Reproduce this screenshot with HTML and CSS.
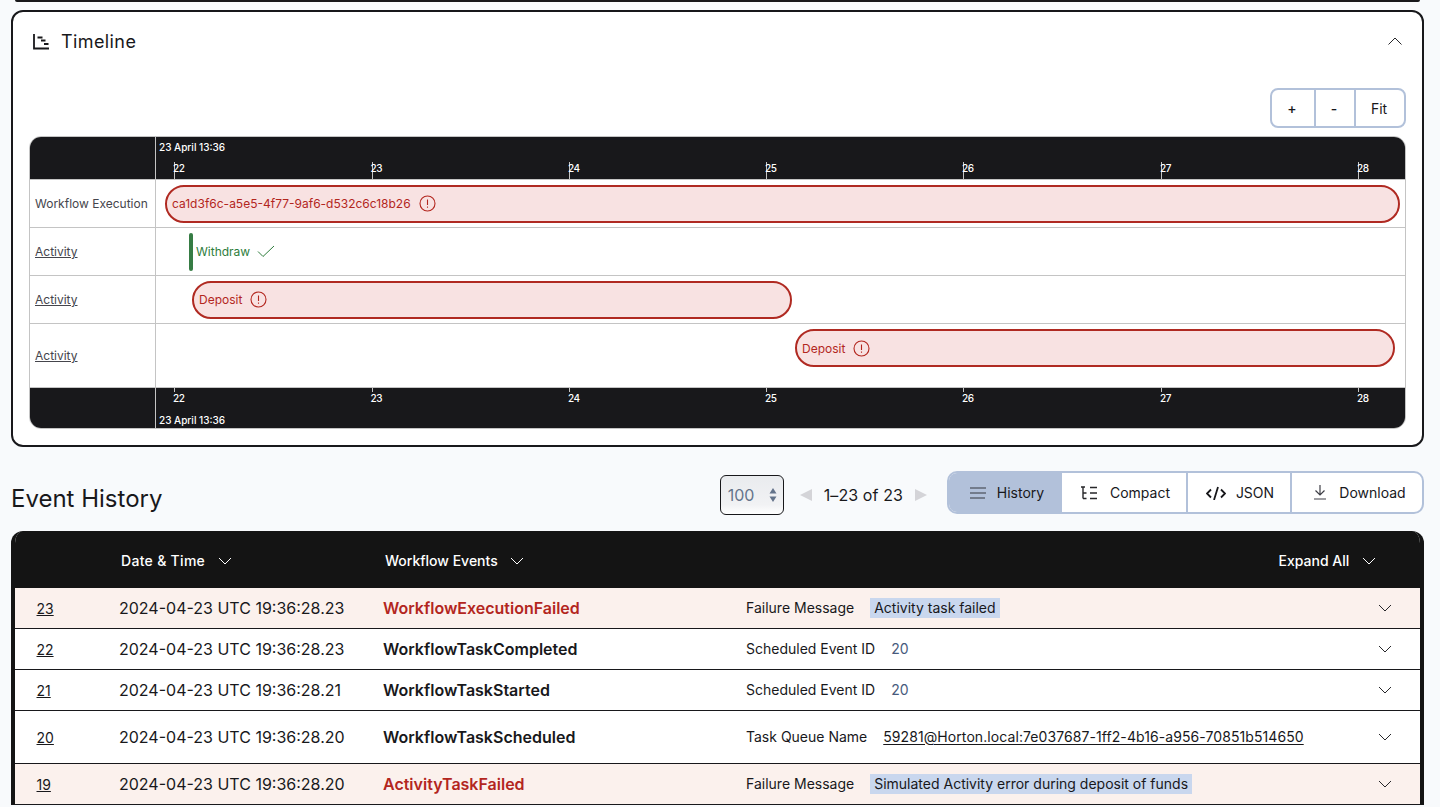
FILE: index.html
```html
<!DOCTYPE html>
<html lang="en">
<head>
    <meta charset="UTF-8">
    <meta name="viewport" content="width=device-width, initial-scale=1.0">
    <title>Workflow Timeline</title>
    <link rel="stylesheet" href="styles.css">
</head>
<body>

<div class="prev-card"></div>

<section class="card">
    <div class="card-head">
        <h2 class="card-title">
            <svg class="ico-chart" width="17" height="16" viewBox="0 0 17 16" fill="none" stroke="#18181b" stroke-width="1.800"><path d="M1 0v14.500h15"/><path d="M4.500 3.500h5M8 6.500h4.500M11 10h4.500"/></svg>
            Timeline
        </h2>
        <svg class="chev" width="16" height="10" viewBox="0 0 16 10" fill="none" stroke="#27272a" stroke-width="1"><path d="M1.500 8.500 8 2l6.500 6.500"/></svg>
    </div>

    <div class="zoom-row">
        <div class="zoom-group">
            <button class="zoom-btn zoom-plus">+</button>
            <button class="zoom-btn zoom-minus">-</button>
            <button class="zoom-btn zoom-fit">Fit</button>
        </div>
    </div>

    <div class="chart">
        <div class="axis axis-top">
            <div class="axis-side"></div>
            <div class="axis-main">
                <span class="axis-date">23 April 13:36</span>
                <span class="tick" style="left: 18px">22</span>
                <span class="tick" style="left: 215.500px">23</span>
                <span class="tick" style="left: 413px">24</span>
                <span class="tick" style="left: 610px">25</span>
                <span class="tick" style="left: 807px">26</span>
                <span class="tick" style="left: 1005px">27</span>
                <span class="tick" style="left: 1202px">28</span>
            </div>
        </div>

        <div class="row">
            <div class="row-label">Workflow Execution</div>
            <div class="row-main">
                <div class="bar bar-fail" style="margin-left: 9px; width: 1235px">
                    <span>ca1d3f6c-a5e5-4f77-9af6-d532c6c18b26</span>
                    <svg class="ico-alert" width="17" height="17" viewBox="0 0 17 17" fill="none" stroke="#b3261e" stroke-width="1.100"><circle cx="8.500" cy="8.500" r="7.500"/><path d="M8.500 4.500v5.500M8.500 11.500v1.300"/></svg>
                </div>
            </div>
        </div>

        <div class="row">
            <div class="row-label"><a href="#">Activity</a></div>
            <div class="row-main">
                <div class="mark" style="margin-left: 33px"></div>
                <span class="mark-text">Withdraw</span>
                <svg class="ico-check" width="18" height="13" viewBox="0 0 18 13" fill="none" stroke="#2e7d3c" stroke-width="1"><path d="M1 6.500 6 11.500 17 1"/></svg>
            </div>
        </div>

        <div class="row">
            <div class="row-label"><a href="#">Activity</a></div>
            <div class="row-main">
                <div class="bar bar-fail" style="margin-left: 36px; width: 600px">
                    <span>Deposit</span>
                    <svg class="ico-alert" width="17" height="17" viewBox="0 0 17 17" fill="none" stroke="#b3261e" stroke-width="1.100"><circle cx="8.500" cy="8.500" r="7.500"/><path d="M8.500 4.500v5.500M8.500 11.500v1.300"/></svg>
                </div>
            </div>
        </div>

        <div class="row row-tall">
            <div class="row-label"><a href="#">Activity</a></div>
            <div class="row-main">
                <div class="bar bar-fail" style="margin-left: 639px; width: 600px">
                    <span>Deposit</span>
                    <svg class="ico-alert" width="17" height="17" viewBox="0 0 17 17" fill="none" stroke="#b3261e" stroke-width="1.100"><circle cx="8.500" cy="8.500" r="7.500"/><path d="M8.500 4.500v5.500M8.500 11.500v1.300"/></svg>
                </div>
            </div>
        </div>

        <div class="axis axis-bottom">
            <div class="axis-side"></div>
            <div class="axis-main">
                <span class="tick" style="left: 18px">22</span>
                <span class="tick" style="left: 215.500px">23</span>
                <span class="tick" style="left: 413px">24</span>
                <span class="tick" style="left: 610px">25</span>
                <span class="tick" style="left: 807px">26</span>
                <span class="tick" style="left: 1005px">27</span>
                <span class="tick" style="left: 1202px">28</span>
                <span class="axis-date">23 April 13:36</span>
            </div>
        </div>
    </div>
</section>

<div class="history-bar">
    <h1 class="history-title">Event History</h1>
    <div class="history-tools">
        <div class="per-page">
            <span>100</span>
            <svg width="8" height="14" viewBox="0 0 8 14" fill="#64748b"><path d="M4 0l3.500 5.500h-7zM4 14l3.500-5.500h-7z"/></svg>
        </div>
        <div class="pager">
            <span class="pager-arrow pager-prev"></span>
            <span class="pager-text">1–23 of 23</span>
            <span class="pager-arrow pager-next"></span>
        </div>
        <div class="view-group">
            <button class="view-btn view-active">
                <svg width="16" height="12" viewBox="0 0 16 12" fill="none" stroke="#5f6673" stroke-width="1.500"><path d="M0 1h16M0 6h16M0 11h15"/></svg>
                History
            </button>
            <button class="view-btn view-compact">
                <svg width="17" height="14" viewBox="0 0 17 14" fill="none" stroke="#27272a" stroke-width="1.400"><path d="M0 1h4M2 1v11.500M2 7h3.500M2 12.500h3.500M9 1.500h7M9 7h7M9 12.500h7"/></svg>
                Compact
            </button>
            <button class="view-btn view-json">
                <svg width="20" height="14" viewBox="0 0 20 14" fill="none" stroke="#18181b" stroke-width="1.800"><path d="M5 3.500 1 7.500l4 4M15 3.500l4 4-4 4M12 1 8 14"/></svg>
                JSON
            </button>
            <button class="view-btn view-download">
                <svg width="14" height="15" viewBox="0 0 14 15" fill="none" stroke="#3f3f46" stroke-width="1.200"><path d="M7 0v10M2.500 5.500 7 10l4.500-4.500M1 14h12"/></svg>
                Download
            </button>
        </div>
    </div>
</div>

<section class="events">
    <div class="events-head">
        <div class="head-date">Date &amp; Time <svg class="chev-down" width="14" height="8" viewBox="0 0 14 8" fill="none" stroke="#fff" stroke-width="1"><path d="M1 1l6 6 6-6"/></svg></div>
        <div class="head-event">Workflow Events <svg class="chev-down" width="14" height="8" viewBox="0 0 14 8" fill="none" stroke="#fff" stroke-width="1"><path d="M1 1l6 6 6-6"/></svg></div>
        <div class="head-expand">Expand All <svg class="chev-down" width="14" height="8" viewBox="0 0 14 8" fill="none" stroke="#fff" stroke-width="1"><path d="M1 1l6 6 6-6"/></svg></div>
    </div>

    <div class="event event-fail">
        <a class="event-id" href="#">23</a>
        <div class="event-date">2024-04-23 UTC 19:36:28.23</div>
        <div class="event-name">WorkflowExecutionFailed</div>
        <div class="event-detail"><span class="detail-key">Failure Message</span><span class="detail-code">Activity task failed</span></div>
        <svg class="event-chev" width="14" height="8" viewBox="0 0 14 8" fill="none" stroke="#27272a" stroke-width="1"><path d="M1 1l6 6 6-6"/></svg>
    </div>
    <div class="event">
        <a class="event-id" href="#">22</a>
        <div class="event-date">2024-04-23 UTC 19:36:28.23</div>
        <div class="event-name">WorkflowTaskCompleted</div>
        <div class="event-detail"><span class="detail-key">Scheduled Event ID</span><span class="detail-num">20</span></div>
        <svg class="event-chev" width="14" height="8" viewBox="0 0 14 8" fill="none" stroke="#27272a" stroke-width="1"><path d="M1 1l6 6 6-6"/></svg>
    </div>
    <div class="event">
        <a class="event-id" href="#">21</a>
        <div class="event-date">2024-04-23 UTC 19:36:28.21</div>
        <div class="event-name">WorkflowTaskStarted</div>
        <div class="event-detail"><span class="detail-key">Scheduled Event ID</span><span class="detail-num">20</span></div>
        <svg class="event-chev" width="14" height="8" viewBox="0 0 14 8" fill="none" stroke="#27272a" stroke-width="1"><path d="M1 1l6 6 6-6"/></svg>
    </div>
    <div class="event event-tall">
        <a class="event-id" href="#">20</a>
        <div class="event-date">2024-04-23 UTC 19:36:28.20</div>
        <div class="event-name">WorkflowTaskScheduled</div>
        <div class="event-detail"><span class="detail-key">Task Queue Name</span><a class="detail-link" href="#">59281@Horton.local:7e037687-1ff2-4b16-a956-70851b514650</a></div>
        <svg class="event-chev" width="14" height="8" viewBox="0 0 14 8" fill="none" stroke="#27272a" stroke-width="1"><path d="M1 1l6 6 6-6"/></svg>
    </div>
    <div class="event event-fail">
        <a class="event-id" href="#">19</a>
        <div class="event-date">2024-04-23 UTC 19:36:28.20</div>
        <div class="event-name">ActivityTaskFailed</div>
        <div class="event-detail"><span class="detail-key">Failure Message</span><span class="detail-code">Simulated Activity error during deposit of funds</span></div>
        <svg class="event-chev" width="14" height="8" viewBox="0 0 14 8" fill="none" stroke="#27272a" stroke-width="1"><path d="M1 1l6 6 6-6"/></svg>
    </div>
</section>

</body>
</html>
```

FILE: styles.css
```css
html, body {
    height: 807px;
    overflow: hidden;
}

body {
    margin: 0;
    font-family: Inter, "Liberation Sans", sans-serif;
    background-color: #f8fafc;
    color: #18181b;
}

a {
    color: inherit;
}

.prev-card {
    height: 2px;
    margin: 0 20px 8px 15px;
    background-color: #18181b;
    border-radius: 0 0 8px 8px;
}

.card {
    height: 433px;
    margin: 0 16px 0 11px;
    background-color: #fff;
    border: 2px solid #18181b;
    border-radius: 12px;
}

.card-head {
    display: flex;
    justify-content: space-between;
    align-items: center;
    height: 58px;
    padding: 0 19px 0 20px;
}

.card-title {
    display: flex;
    align-items: center;
    gap: 11px;
    margin: 1px 0 0 0;
    font-size: 18px;
    font-weight: 400;
    letter-spacing: 0.4px;
}

.zoom-row {
    display: flex;
    justify-content: flex-end;
    height: 66px;
    padding: 18px 16px 0 0;
    box-sizing: border-box;
}

.zoom-group {
    display: flex;
    height: 40px;
    box-sizing: border-box;
    border: 2px solid #b2c1da;
    border-radius: 8px;
    background-color: #fff;
    overflow: hidden;
}

.zoom-btn {
    border: 0;
    border-right: 2px solid #b2c1da;
    background: none;
    padding: 0 2px 0 0;
    font-family: Inter, sans-serif;
    color: #18181b;
    font-size: 14px;
}

.zoom-plus {
    width: 44px;
    font-weight: 500;
}

.zoom-minus {
    width: 40px;
    font-weight: 500;
}

.zoom-fit {
    width: 48px;
    border-right: 0;
}

.chart {
    margin: 0 16px;
    height: 293px;
    box-sizing: border-box;
    border: 1px solid #c4c4c4;
    border-radius: 12px;
    overflow: hidden;
    font-size: 12px;
}

.axis {
    display: flex;
    background-color: #18181b;
    color: #fff;
    font-size: 10px;
    font-weight: 500;
}

.axis-top {
    height: 43px;
    box-sizing: border-box;
    border-bottom: 1px solid #c4c4c4;
}

.axis-bottom {
    height: 40px;
}

.axis-side {
    width: 126px;
    flex: none;
    box-sizing: border-box;
    border-right: 1px solid #c4c4c4;
}

.axis-main {
    position: relative;
    flex: 1;
}

.axis-date {
    position: absolute;
    left: 3px;
    top: 4px;
    line-height: 12px;
}

.axis-bottom .axis-date {
    top: 26px;
}

.tick {
    position: absolute;
    top: 25px;
    width: 1px;
    height: 17px;
    line-height: 12px;
    letter-spacing: -0.4px;
    text-indent: -1px;
    background-color: #c4c4c4;
    white-space: nowrap;
}

.axis-bottom .tick {
    top: 0;
    height: 4px;
    line-height: 20px;
}

.row {
    display: flex;
    height: 48px;
    box-sizing: border-box;
    border-bottom: 1px solid #c4c4c4;
    background-color: #fff;
}

.row-tall {
    height: 64px;
}

.row-tall .row-main {
    align-items: flex-start;
    padding-top: 5px;
}

.row-label {
    display: flex;
    align-items: center;
    width: 126px;
    flex: none;
    padding-left: 5px;
    box-sizing: border-box;
    border-right: 1px solid #c4c4c4;
    color: #45454c;
}

.row-main {
    display: flex;
    align-items: center;
    flex: 1;
}

.bar {
    display: flex;
    align-items: center;
    gap: 8px;
    height: 38px;
    padding-left: 5px;
    box-sizing: border-box;
    border: 2px solid #b02a22;
    border-radius: 19px;
    background-color: #f8e2e2;
    color: #b3261e;
    font-size: 12px;
}

.mark {
    width: 4px;
    height: 38px;
    border-radius: 2px;
    background-color: #367c44;
}

.mark-text {
    margin-left: 3px;
    color: #2e7d3c;
    font-size: 12px;
}

.ico-check {
    margin-left: 7px;
}

.history-bar {
    display: flex;
    justify-content: space-between;
    align-items: flex-start;
    height: 84px;
    padding: 24px 16px 0 11px;
    box-sizing: border-box;
}

.history-title {
    margin: 12px 0 0 0;
    font-size: 24px;
    line-height: 32px;
    font-weight: 400;
}

.history-tools {
    display: flex;
    align-items: flex-start;
}

.per-page {
    display: flex;
    justify-content: space-between;
    align-items: center;
    width: 64px;
    height: 40px;
    margin-top: 4px;
    padding: 0 6px 0 7px;
    box-sizing: border-box;
    border: 1px solid #18181b;
    border-radius: 6px;
    background: linear-gradient(#e9ebee, #f1f2f4 75%, #fff);
    color: #64748b;
    font-size: 16px;
}

.pager {
    display: flex;
    align-items: center;
    gap: 12px;
    height: 40px;
    margin: 4px 20px 0 16px;
    font-size: 16px;
    letter-spacing: 0.1px;
}

.pager-arrow {
    width: 0;
    height: 0;
    border-top: 6px solid transparent;
    border-bottom: 6px solid transparent;
}

.pager-prev {
    border-right: 12px solid #d4d4d8;
}

.pager-next {
    border-left: 12px solid #d4d4d8;
}

.view-group {
    display: flex;
    height: 43px;
    box-sizing: border-box;
    border: 2px solid #b2c1da;
    border-radius: 10px;
    background-color: #fff;
    overflow: hidden;
}

.view-btn {
    display: flex;
    align-items: center;
    justify-content: center;
    gap: 12px;
    padding: 0;
    border: 0;
    border-right: 2px solid #b2c1da;
    background: none;
    color: #18181b;
    font-family: Inter, sans-serif;
    font-size: 14px;
}

.view-active {
    width: 113px;
    padding-left: 3px;
    gap: 11px;
    background-color: #b2c1da;
    border-right: 0;
}

.view-compact {
    width: 126px;
    padding-left: 3px;
}

.view-json {
    width: 104px;
    padding-left: 2px;
    gap: 10px;
}

.view-download {
    width: 130px;
    padding-left: 5px;
    border-right: 0;
}

.events {
    margin: 0 16px 0 11px;
    border-radius: 12px 12px 0 0;
    border: solid #141414;
    border-width: 0 4px;
    overflow: hidden;
}

.events-head {
    display: flex;
    align-items: center;
    height: 57px;
    padding-top: 2px;
    box-sizing: border-box;
    background-color: #141414;
    color: #fff;
    font-size: 14px;
    font-weight: 500;
}

.head-date {
    width: 264px;
    margin-left: 106px;
    letter-spacing: 0.3px;
}

.head-event {
    flex: 1;
}

.head-expand {
    margin-right: 44px;
}

.chev-down {
    margin-left: 9px;
    vertical-align: 1px;
}

.event {
    display: flex;
    align-items: center;
    height: 41px;
    box-sizing: border-box;
    border-bottom: 1px solid #18181b;
    background-color: #fff;
    font-size: 14px;
}

.event-tall {
    height: 53px;
}

.event-fail {
    background-color: #fbf1ed;
}

.event-id {
    width: 82.500px;
    margin-left: 21.500px;
    font-size: 14px;
}

.event-date {
    width: 264px;
    font-size: 16px;
}

.event-name {
    width: 363px;
    font-size: 16px;
    font-weight: 600;
}

.event-fail .event-name {
    color: #b3261e;
}

.event-detail {
    display: flex;
    align-items: center;
    flex: 1;
    line-height: 16px;
}

.detail-key {
    margin-right: 16px;
}

.detail-num {
    color: #475a7c;
}

.detail-code {
    padding: 2px 4px;
    background-color: #c9d7ee;
}

.detail-link {
    letter-spacing: 0.08px;
    text-underline-offset: 2px;
}

.event-chev {
    margin-right: 28px;
}
```
